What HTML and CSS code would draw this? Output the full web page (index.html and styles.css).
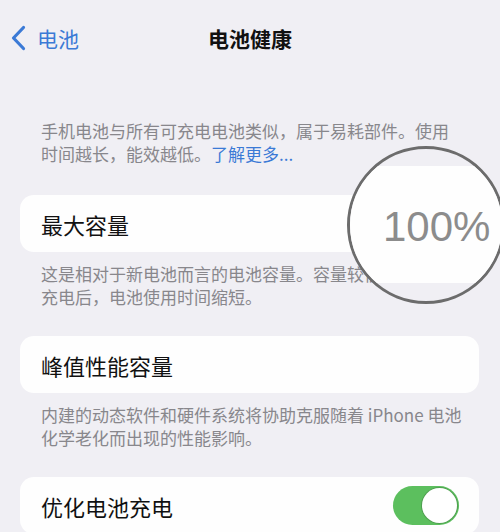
FILE: index.html
```html
<!DOCTYPE html>
<html lang="zh-CN">
<head>
<meta charset="utf-8">
<link rel="stylesheet" href="styles.css">
</head>
<body>
<div class="page">
  <header class="nav">
    <div class="back">
      <svg class="chev" width="16" height="26" viewBox="0 0 16 26"><polyline points="12.5,2.5 2.5,13 12.5,23.5" fill="none" stroke="#3b7ad6" stroke-width="3.2" stroke-linecap="round" stroke-linejoin="round"/></svg>
      <span>电池</span>
    </div>
    <div class="title">电池健康</div>
    <div></div>
  </header>

  <p class="intro"><span>手机电池与所有可充电电池类似，属于易耗部件。使用</span><br><span>时间越长，能效越低。</span><span class="link">了解更多...</span></p>

  <div class="card"><span class="label">最大容量</span></div>
  <p class="foot">这是相对于新电池而言的电池容量。容量较低可能导致<br>充电后，电池使用时间缩短。</p>

  <div class="card"><span class="label">峰值性能容量</span></div>
  <p class="foot">内建的动态软件和硬件系统将协助克服随着 iPhone 电池<br>化学老化而出现的性能影响。</p>

  <div class="card">
    <span class="label">优化电池充电</span>
    <span class="toggle"><span class="knob"></span></span>
  </div>

  <div class="lens">
    <div class="lens-band"></div>
    <div class="lens-value">100%</div>
  </div>
</div>
</body>
</html>
```

FILE: styles.css
```css
html, body {
  margin: 0;
  padding: 0;
  background: #f0eff4;
}
body {
  font-family: "Noto Sans CJK SC", "Noto Sans", sans-serif;
  width: 500px;
  height: 532px;
  overflow: hidden;
}
.page {
  position: relative;
  width: 500px;
  height: 532px;
  overflow: hidden;
}
.nav {
  height: 76px;
  display: grid;
  grid-template-columns: 1fr auto 1fr;
  align-items: center;
}
.back {
  display: flex;
  align-items: center;
  gap: 10px;
  padding-left: 11px;
  color: #3b7ad6;
  font-size: 21px;
}
.chev {
  display: block;
}
.title {
  font-size: 21px;
  font-weight: 700;
  color: #111;
}
.intro {
  margin: 43px 0 0 0;
  padding: 0 20px 0 41px;
  font-size: 17px;
  line-height: 23px;
  color: #88878c;
  white-space: nowrap;
}
.link {
  color: #3b7ad6;
}
.card {
  margin: 30px 21px 0 20px;
  height: 57px;
  background: #fefefe;
  border-radius: 14px;
  display: flex;
  align-items: center;
  justify-content: space-between;
  padding: 0 21px;
}
.foot + .card {
  margin-top: 28px;
}
.label {
  font-size: 22px;
  color: #111;
}
.foot {
  margin: 0;
  padding: 10px 20px 0 41px;
  font-size: 17px;
  line-height: 23px;
  color: #88878c;
  white-space: nowrap;
}
.toggle {
  width: 66px;
  height: 39px;
  border-radius: 20px;
  background: #5cbf5e;
  display: flex;
  align-items: center;
  justify-content: flex-end;
  padding: 0 2px;
  box-sizing: border-box;
  margin-right: -1px;
}
.knob {
  width: 35px;
  height: 35px;
  border-radius: 50%;
  background: #fff;
  box-shadow: 0 0 0 1px #4f9f50;
}
.lens {
  position: absolute;
  left: 347px;
  top: 146px;
  width: 158px;
  height: 158px;
  border: 3px solid #6c6c6c;
  border-radius: 50%;
  background: #f0eff4;
  overflow: hidden;
  box-sizing: border-box;
}
.lens-band {
  position: absolute;
  left: 0;
  right: 0;
  top: 17px;
  height: 117px;
  background: #fefefe;
}
.lens-value {
  position: absolute;
  left: 33px;
  top: 52px;
  font-family: "Liberation Sans", Arial, sans-serif;
  font-size: 42px;
  line-height: 52px;
  color: #8c8c8c;
  letter-spacing: 0;
}
```
